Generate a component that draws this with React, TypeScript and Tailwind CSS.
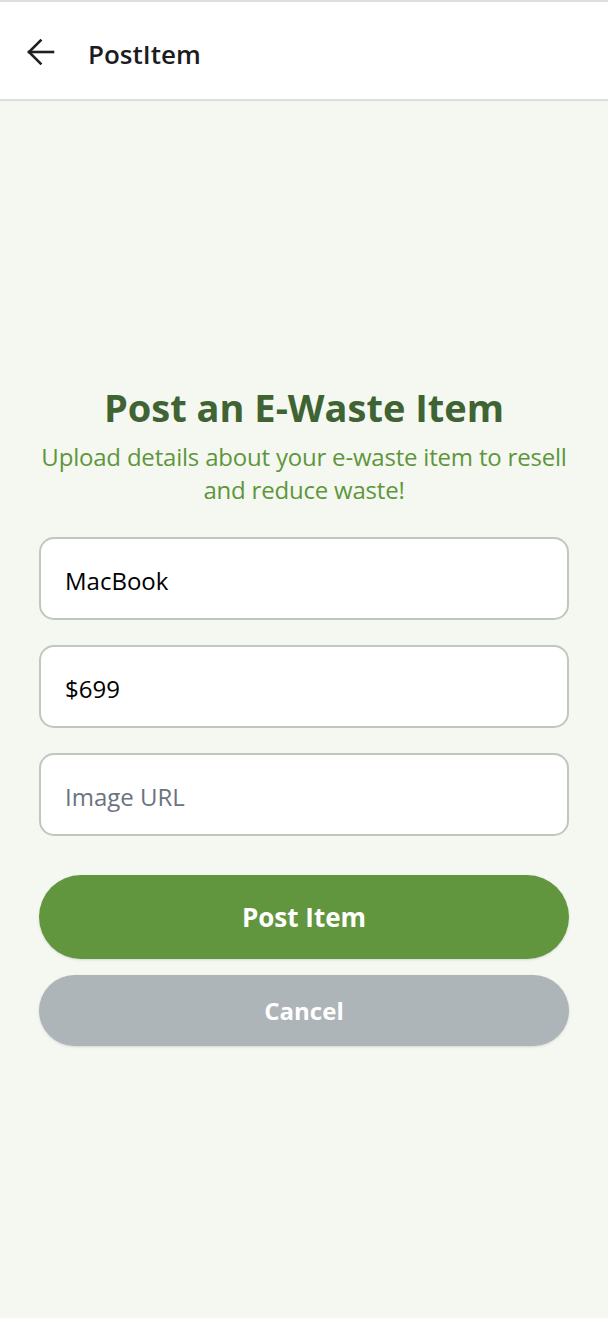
import React, { useState } from 'react';

const font = { fontFamily: '"Open Sans", "Noto Sans", sans-serif' };

const App: React.FC = () => {
  const [name, setName] = useState('MacBook');
  const [price, setPrice] = useState('$699');
  const [imageUrl, setImageUrl] = useState('');

  return (
    <div className="flex min-h-[1318px] w-full flex-col bg-[#f4f8f1]" style={font}>
      <header className="flex h-[101px] items-center border-t-2 border-b-2 border-[#dedede] bg-white pt-[3px]">
        <button type="button" className="ml-[27px] flex h-[28px] w-[28px] items-center justify-center">
          <svg width="28" height="28" viewBox="0 0 28 28" fill="none" stroke="#1f1f1f" strokeWidth="2.6" strokeLinecap="square">
            <path d="M2 14h24" />
            <path d="M13.5 2.5 2 14l11.5 11.5" />
          </svg>
        </button>
        <h1 className="ml-[33px] mt-[4px] text-[26px] font-semibold text-[#1c1b1f]">PostItem</h1>
      </header>

      <main className="flex flex-1 flex-col px-[39px] pt-[283px]">
        <h2 className="text-center text-[38px] font-bold leading-[46px] text-[#3f6333]">
          Post an E-Waste Item
        </h2>
        <p className="-mx-[12px] mt-[10px] text-center text-[24px] leading-[33px] tracking-[-0.2px] text-[#5f963c]">
          Upload details about your e-waste item to resell and reduce waste!
        </p>

        <div className="mt-[31px] flex flex-col gap-[25px]">
          <input
            value={name}
            onChange={(e) => setName(e.target.value)}
            className="h-[83px] w-full rounded-[15px] border-2 border-[#c0c8bd] bg-white px-[24px] pt-[4px] text-[24px] text-black outline-none"
          />
          <input
            value={price}
            onChange={(e) => setPrice(e.target.value)}
            className="h-[83px] w-full rounded-[15px] border-2 border-[#c0c8bd] bg-white px-[24px] pt-[4px] text-[24px] text-black outline-none"
          />
          <input
            value={imageUrl}
            onChange={(e) => setImageUrl(e.target.value)}
            placeholder="Image URL"
            className="h-[83px] w-full rounded-[15px] border-2 border-[#c0c8bd] bg-white px-[24px] pt-[4px] text-[24px] text-black outline-none placeholder:text-[#6b7280]"
          />
        </div>

        <button
          type="button"
          className="mt-[39px] h-[84px] w-full rounded-full bg-[#62963e] text-[26px] font-bold text-white shadow-sm"
        >
          Post Item
        </button>
        <button
          type="button"
          className="mt-[16px] h-[71px] w-full rounded-full bg-[#adb5b8] text-[24px] font-bold text-white shadow-sm"
        >
          Cancel
        </button>
      </main>
    </div>
  );
};

export default App;
